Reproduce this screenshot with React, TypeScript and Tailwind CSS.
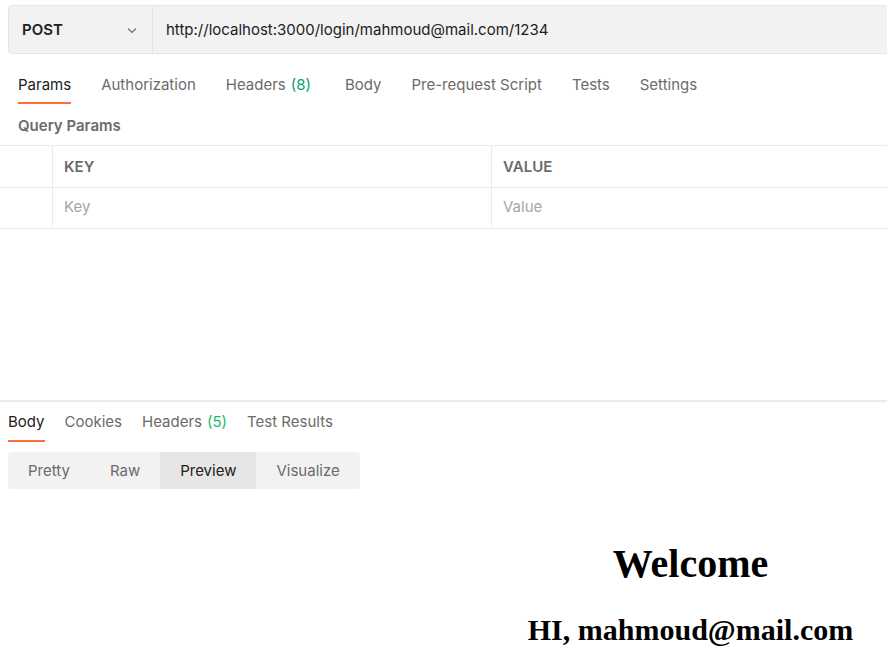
import React from "react";

const ui = { fontFamily: "Inter, 'Noto Sans', sans-serif" };
const serif = { fontFamily: "'Liberation Serif', 'Times New Roman', serif" };

export default function App() {
  const reqTabs = [
    { label: "Params", active: true },
    { label: "Authorization" },
    { label: "Headers", count: "(8)" },
    { label: "Body" },
    { label: "Pre-request Script" },
    { label: "Tests" },
    { label: "Settings" },
  ];
  const resTabs = [
    { label: "Body", active: true },
    { label: "Cookies" },
    { label: "Headers", count: "(5)" },
    { label: "Test Results" },
  ];
  const modes = ["Pretty", "Raw", "Preview", "Visualize"];

  return (
    <div className="w-[887px] h-[658px] overflow-hidden bg-white text-[15px] leading-[21px]" style={ui}>
      {/* URL bar */}
      <div className="pt-[5px] pl-2">
        <div className="flex h-[49px] w-[1000px] bg-[#f2f2f2] border border-[#e6e6e6] rounded-l-[4px]">
          <div className="w-[144px] shrink-0 flex items-center justify-between pl-[13px] pr-[14px] border-r border-[#e6e6e6]">
            <span className="font-semibold text-[#212121]">POST</span>
            <svg width="12" height="12" viewBox="0 0 12 12" fill="none">
              <path d="M2 4.5L6 8.5L10 4.5" stroke="#6b6b6b" strokeWidth="1.1" />
            </svg>
          </div>
          <div className="flex items-center pl-[13px] text-[#212121]">
            http://localhost:3000/login/mahmoud@mail.com/1234
          </div>
        </div>
      </div>

      {/* Request tabs */}
      <div className="flex gap-[30px] pl-[18px] mt-[14px] h-[36px]">
        {reqTabs.map((t) => (
          <div
            key={t.label}
            className={`flex items-start pt-[6px] border-b-2 ${
              t.active ? "border-[#ff6c37] text-[#212121]" : "border-transparent text-[#6b6b6b]"
            } ${t.count ? "mr-[4px]" : ""}`}
          >
            {t.label}
            {t.count && <span className="ml-[5px] text-[#0a9e6e]">{t.count}</span>}
          </div>
        ))}
      </div>

      {/* Query Params */}
      <div className="pl-[18px] mt-[11px] font-semibold text-[#6b6b6b] h-[22px] leading-[22px]">
        Query Params
      </div>

      {/* Table */}
      <div className="mt-[8px] border-t border-[#ebebeb]">
        <div className="flex h-[42px] border-b border-[#ebebeb]">
          <div className="w-[53px] border-r border-[#ebebeb]" />
          <div className="w-[439px] border-r border-[#ebebeb] flex items-center pl-[11px] font-semibold text-[#6b6b6b]">
            KEY
          </div>
          <div className="flex-1 flex items-center pl-[11px] font-semibold text-[#6b6b6b]">VALUE</div>
        </div>
        <div className="flex h-[41px] border-b border-[#ebebeb]">
          <div className="w-[53px] border-r border-[#ebebeb]" />
          <div className="w-[439px] border-r border-[#ebebeb] flex items-center pl-[11px] pb-[4px] text-[#a6a6a6]">
            Key
          </div>
          <div className="flex-1 flex items-center pl-[11px] pb-[4px] text-[#a6a6a6]">Value</div>
        </div>
      </div>

      {/* Response panel */}
      <div className="mt-[171px] border-t-2 border-[#ebebeb]">
        <div className="flex gap-[20px] pl-2 h-[40px]">
          {resTabs.map((t) => (
            <div
              key={t.label}
              className={`flex items-start pt-[9px] border-b-2 ${
                t.active ? "border-[#ff6c37] text-[#212121]" : "border-transparent text-[#6b6b6b]"
              }`}
            >
              {t.label}
              {t.count && <span className="ml-[5px] text-[#1cb86a]">{t.count}</span>}
            </div>
          ))}
        </div>

        <div className="pl-2 mt-[10px]">
          <div className="inline-flex h-[37px] rounded-[4px] bg-[#f2f2f2] overflow-hidden">
            {modes.map((m) => (
              <div
                key={m}
                className={`flex items-center px-5 pb-[1px] ${
                  m === "Preview" ? "bg-[#e6e6e6] text-[#212121]" : "text-[#6b6b6b]"
                }`}
              >
                {m}
              </div>
            ))}
          </div>
        </div>

        {/* Preview content */}
        <div className="w-[1381px] text-center text-black" style={serif}>
          <h1 className="text-[40px] font-bold leading-[46px] mt-[52px]">Welcome</h1>
          <h2 className="text-[30px] font-bold leading-[34px] mt-[26px]">HI, mahmoud@mail.com</h2>
        </div>
      </div>
    </div>
  );
}
